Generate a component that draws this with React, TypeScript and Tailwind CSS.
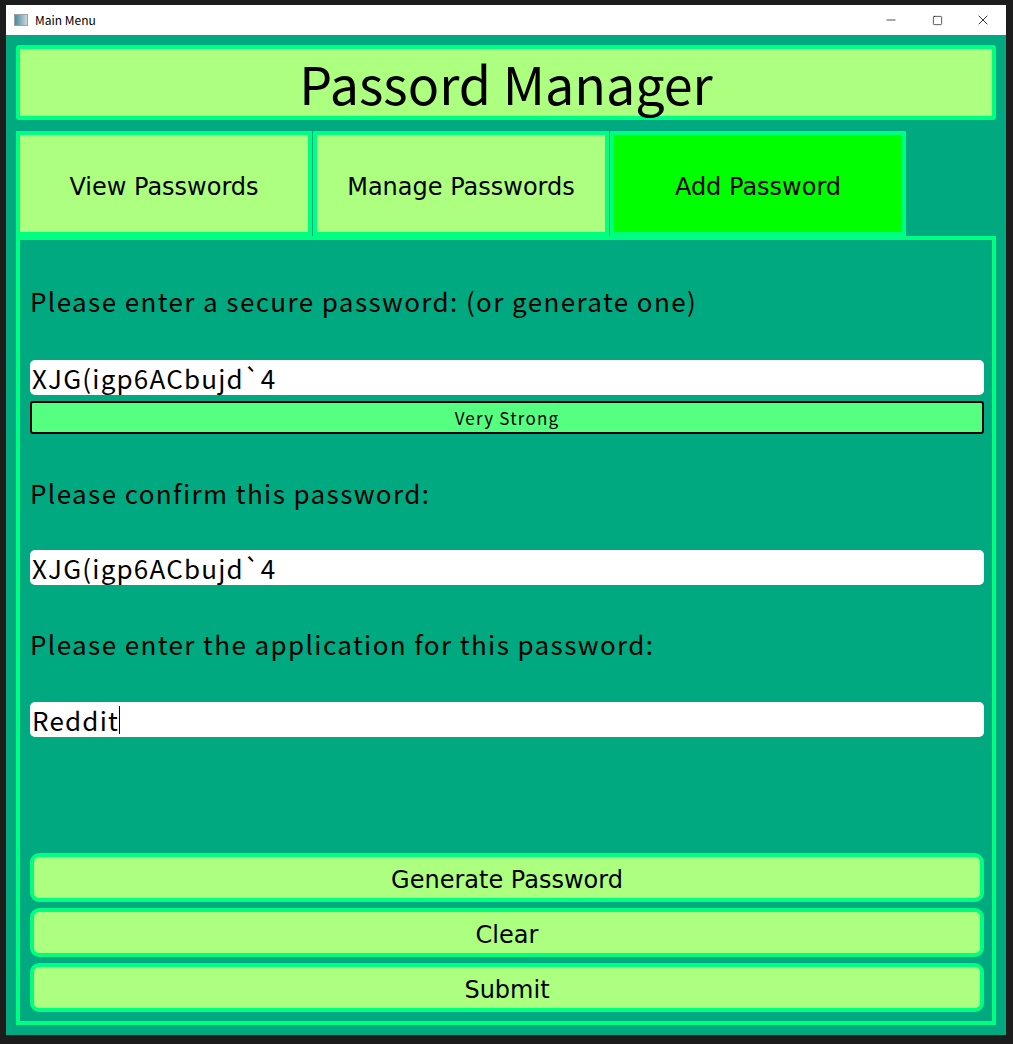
import { Minus, Square, X } from "lucide-react";

const jp = "font-['Noto_Sans_CJK_JP',sans-serif]";
const ui = "font-['DejaVu_Sans',sans-serif]";

function TitleBar() {
  return (
    <div className="h-[30px] bg-white flex items-center shrink-0">
      <div className="ml-[8px] w-[14px] h-[12px] border border-gray-400 bg-gradient-to-r from-[#4a8a9a] to-[#c8d8e0]" />
      <span className={`ml-[7px] text-[12px] text-black ${jp}`}>Main Menu</span>
      <div className="ml-auto flex h-full">
        <div className="w-[46px] flex items-center justify-center">
          <Minus size={14} strokeWidth={1.2} />
        </div>
        <div className="w-[46px] flex items-center justify-center">
          <Square size={11} strokeWidth={1.4} />
        </div>
        <div className="w-[46px] flex items-center justify-center">
          <X size={16} strokeWidth={1.2} />
        </div>
      </div>
    </div>
  );
}

function Tab({ label, active }: { label: string; active?: boolean }) {
  return (
    <div
      className={`w-[296px] h-full border-[4px] border-[#00ff80] flex items-center justify-center pt-[6px] text-[24px] text-black ${ui} ${
        active ? "bg-[#00ff00]" : "bg-[#adff7f]"
      }`}
    >
      {label}
    </div>
  );
}

function Field({ value, caret }: { value: string; caret?: boolean }) {
  return (
    <div className={`h-[35px] bg-white rounded-[5px] flex items-center pl-[2px] text-[26px] tracking-[1.2px] text-black ${jp}`}>
      <span className="leading-none">{value}</span>
      {caret && <span className="w-px h-[28px] bg-black" />}
    </div>
  );
}

function Label({ text }: { text: string }) {
  return (
    <div className={`h-[36px] flex items-center text-[26px] tracking-[1.4px] text-black ${jp}`}>{text}</div>
  );
}

function ActionButton({ label }: { label: string }) {
  return (
    <div
      className={`h-[49px] rounded-[9px] border-[4px] border-[#00ff80] bg-[#adff7f] flex items-center justify-center pt-[4px] text-[24px] text-black ${ui}`}
    >
      {label}
    </div>
  );
}

export default function App() {
  return (
    <div className="w-[1013px] h-[1044px] bg-[#1c1c1c] pl-[6px] pr-[7px] pt-[5px] pb-[9px]">
      <div className="w-full h-full flex flex-col">
        <TitleBar />
        <div className="flex-1 bg-[#00a980] px-[10px] pt-[10px] pb-[10px] flex flex-col">
          <div
            className={`h-[75px] shrink-0 border-[4px] border-[#00ff80] rounded-[3px] bg-[#adff7f] flex items-center justify-center text-[52px] text-black ${jp}`}
          >
            Passord Manager
          </div>
          <div className="mt-[11px] h-[105px] shrink-0 flex gap-[1px]">
            <Tab label="View Passwords" />
            <Tab label="Manage Passwords" />
            <Tab label="Add Password" active />
          </div>
          <div className="flex-1 border-[4px] border-[#00ff80] pl-[10px] pr-[8px] flex flex-col">
            <div className="mt-[42px]">
              <Label text="Please enter a secure password: (or generate one)" />
            </div>
            <div className="mt-[42px]">
              <Field value="XJG(igp6ACbujd`4" />
            </div>
            <div
              className={`mt-[6px] h-[33px] border-[2px] border-black rounded-[3px] bg-[#55ff80] flex items-center justify-center text-[17px] tracking-[1.2px] text-black ${jp}`}
            >
              Very Strong
            </div>
            <div className="mt-[40px]">
              <Label text="Please confirm this password:" />
            </div>
            <div className="mt-[40px]">
              <Field value="XJG(igp6ACbujd`4" />
            </div>
            <div className="mt-[40px]">
              <Label text="Please enter the application for this password:" />
            </div>
            <div className="mt-[41px]">
              <Field value="Reddit" caret />
            </div>
            <div className="mt-auto mb-[9px] flex flex-col gap-[6px]">
              <ActionButton label="Generate Password" />
              <ActionButton label="Clear" />
              <ActionButton label="Submit" />
            </div>
          </div>
        </div>
      </div>
    </div>
  );
}
